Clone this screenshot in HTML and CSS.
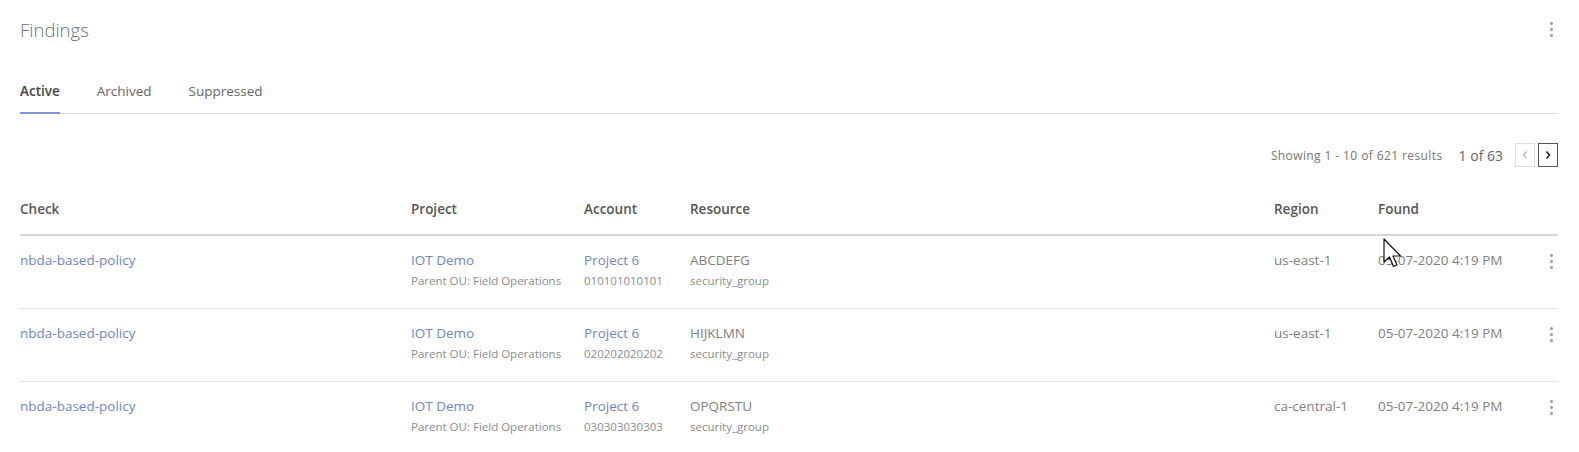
FILE: index.html
```html
<!DOCTYPE html>
<html lang="en">

<head>
    <meta charset="UTF-8">
    <title>Findings</title>
    <link rel="stylesheet" href="styles.css">
</head>

<body>
    <div class="panel">
        <div class="panel-head">
            <h1 class="title">Findings</h1>
            <span class="kebab"><i></i><i></i><i></i></span>
        </div>

        <div class="tabs">
            <div class="tab active">Active</div>
            <div class="tab">Archived</div>
            <div class="tab">Suppressed</div>
        </div>

        <div class="pager">
            <span class="pager-info">Showing 1 - 10 of 621 results</span>
            <span class="pager-page">1 of 63</span>
            <span class="pager-btns">
                <span class="pbtn disabled">
                    <svg width="8" height="10" viewBox="0 0 8 10"><path d="M5.5 1.5 L2.5 5 L5.5 8.5" fill="none" stroke="currentColor" stroke-width="1.3"/></svg>
                </span>
                <span class="pbtn">
                    <svg width="8" height="10" viewBox="0 0 8 10"><path d="M2.5 1.5 L5.5 5 L2.5 8.5" fill="none" stroke="currentColor" stroke-width="1.6"/></svg>
                </span>
            </span>
        </div>

        <div class="grid head-row">
            <div>Check</div>
            <div>Project</div>
            <div>Account</div>
            <div>Resource</div>
            <div>Region</div>
            <div>Found</div>
            <div></div>
        </div>

        <div class="grid row">
            <div><a class="link">nbda-based-policy</a></div>
            <div><a class="link">IOT Demo</a><div class="sub">Parent OU: Field Operations</div></div>
            <div><a class="link">Project 6</a><div class="sub">010101010101</div></div>
            <div><span class="txt">ABCDEFG</span><div class="sub">security_group</div></div>
            <div class="txt">us-east-1</div>
            <div class="txt">05-07-2020 4:19 PM</div>
            <div><span class="kebab"><i></i><i></i><i></i></span></div>
        </div>

        <div class="grid row">
            <div><a class="link">nbda-based-policy</a></div>
            <div><a class="link">IOT Demo</a><div class="sub">Parent OU: Field Operations</div></div>
            <div><a class="link">Project 6</a><div class="sub">020202020202</div></div>
            <div><span class="txt">HIJKLMN</span><div class="sub">security_group</div></div>
            <div class="txt">us-east-1</div>
            <div class="txt">05-07-2020 4:19 PM</div>
            <div><span class="kebab"><i></i><i></i><i></i></span></div>
        </div>

        <div class="grid row">
            <div><a class="link">nbda-based-policy</a></div>
            <div><a class="link">IOT Demo</a><div class="sub">Parent OU: Field Operations</div></div>
            <div><a class="link">Project 6</a><div class="sub">030303030303</div></div>
            <div><span class="txt">OPQRSTU</span><div class="sub">security_group</div></div>
            <div class="txt">ca-central-1</div>
            <div class="txt">05-07-2020 4:19 PM</div>
            <div><span class="kebab"><i></i><i></i><i></i></span></div>
        </div>
    </div>

    <!-- mouse pointer captured in the screenshot -->
    <svg class="cursor" width="22" height="32" viewBox="0 0 22 32">
        <path d="M1 1 L1 24 L6.5 19 L10.5 28.5 L14 27 L10 18 L17.5 18 Z" fill="#fff" stroke="#111" stroke-width="1.2" stroke-linejoin="round"/>
    </svg>
</body>

</html>
```

FILE: styles.css
```css
body {
    margin: 0;
    background-color: white;
    font-family: "Open Sans", "Noto Sans", sans-serif;
    color: #6f6f6f;
}

.panel {
    position: relative;
    padding: 0 21px 0 20px;
}

.panel-head {
    display: flex;
    align-items: center;
    justify-content: space-between;
    height: 58px;
}

.title {
    margin: 0;
    font-size: 18.5px;
    font-weight: 300;
    color: #707070;
}

.kebab {
    display: inline-flex;
    flex-direction: column;
    align-items: center;
    gap: 3px;
    width: 14px;
}

.kebab i {
    display: block;
    width: 3px;
    height: 3px;
    border-radius: 50%;
    background-color: #9a9a9a;
}

.tabs {
    display: flex;
    gap: 37px;
    margin-top: 16px;
    border-bottom: 1px solid #dcdcdc;
}

.tab {
    font-size: 13.5px;
    color: #666;
    padding: 8px 0 12px;
    margin-bottom: -1px;
    border-bottom: 2px solid transparent;
}

.tab.active {
    font-weight: 600;
    color: #444;
    border-bottom-color: #7d95cf;
}

.pager {
    display: flex;
    align-items: center;
    justify-content: flex-end;
    margin-top: 29px;
    height: 24px;
}

.pager-info {
    font-size: 12px;
    letter-spacing: 0.4px;
    color: #777;
}

.pager-page {
    font-size: 14px;
    color: #666;
    margin-left: 16px;
}

.pager-btns {
    display: flex;
    gap: 3px;
    margin-left: 12px;
}

.pbtn {
    display: flex;
    align-items: center;
    justify-content: center;
    width: 18px;
    height: 22px;
    border: 1px solid #ddd;
    color: #bbb;
}

.pbtn + .pbtn {
    border-color: #555;
    color: #222;
}

.grid {
    display: grid;
    grid-template-columns: 391px 173px 106px 584px 104px 1fr 14px;
}

.head-row {
    font-size: 13.5px;
    font-weight: 600;
    color: #555;
    padding: 33px 0 16px;
    border-bottom: 2px solid #d6d6d6;
}

.row {
    font-size: 13.5px;
    padding: 15px 0 19px;
    border-bottom: 1px solid #e4e4e4;
    height: 38px;
}

.row:last-child {
    border-bottom: none;
}

.link {
    color: #7086c6;
}

.txt {
    color: #808080;
}

.sub {
    font-size: 11.5px;
    color: #8c8c8c;
    margin-top: 4px;
}

.row .kebab {
    display: flex;
    margin-top: 3px;
}

.cursor {
    position: absolute;
    left: 1383px;
    top: 238px;
}
```
